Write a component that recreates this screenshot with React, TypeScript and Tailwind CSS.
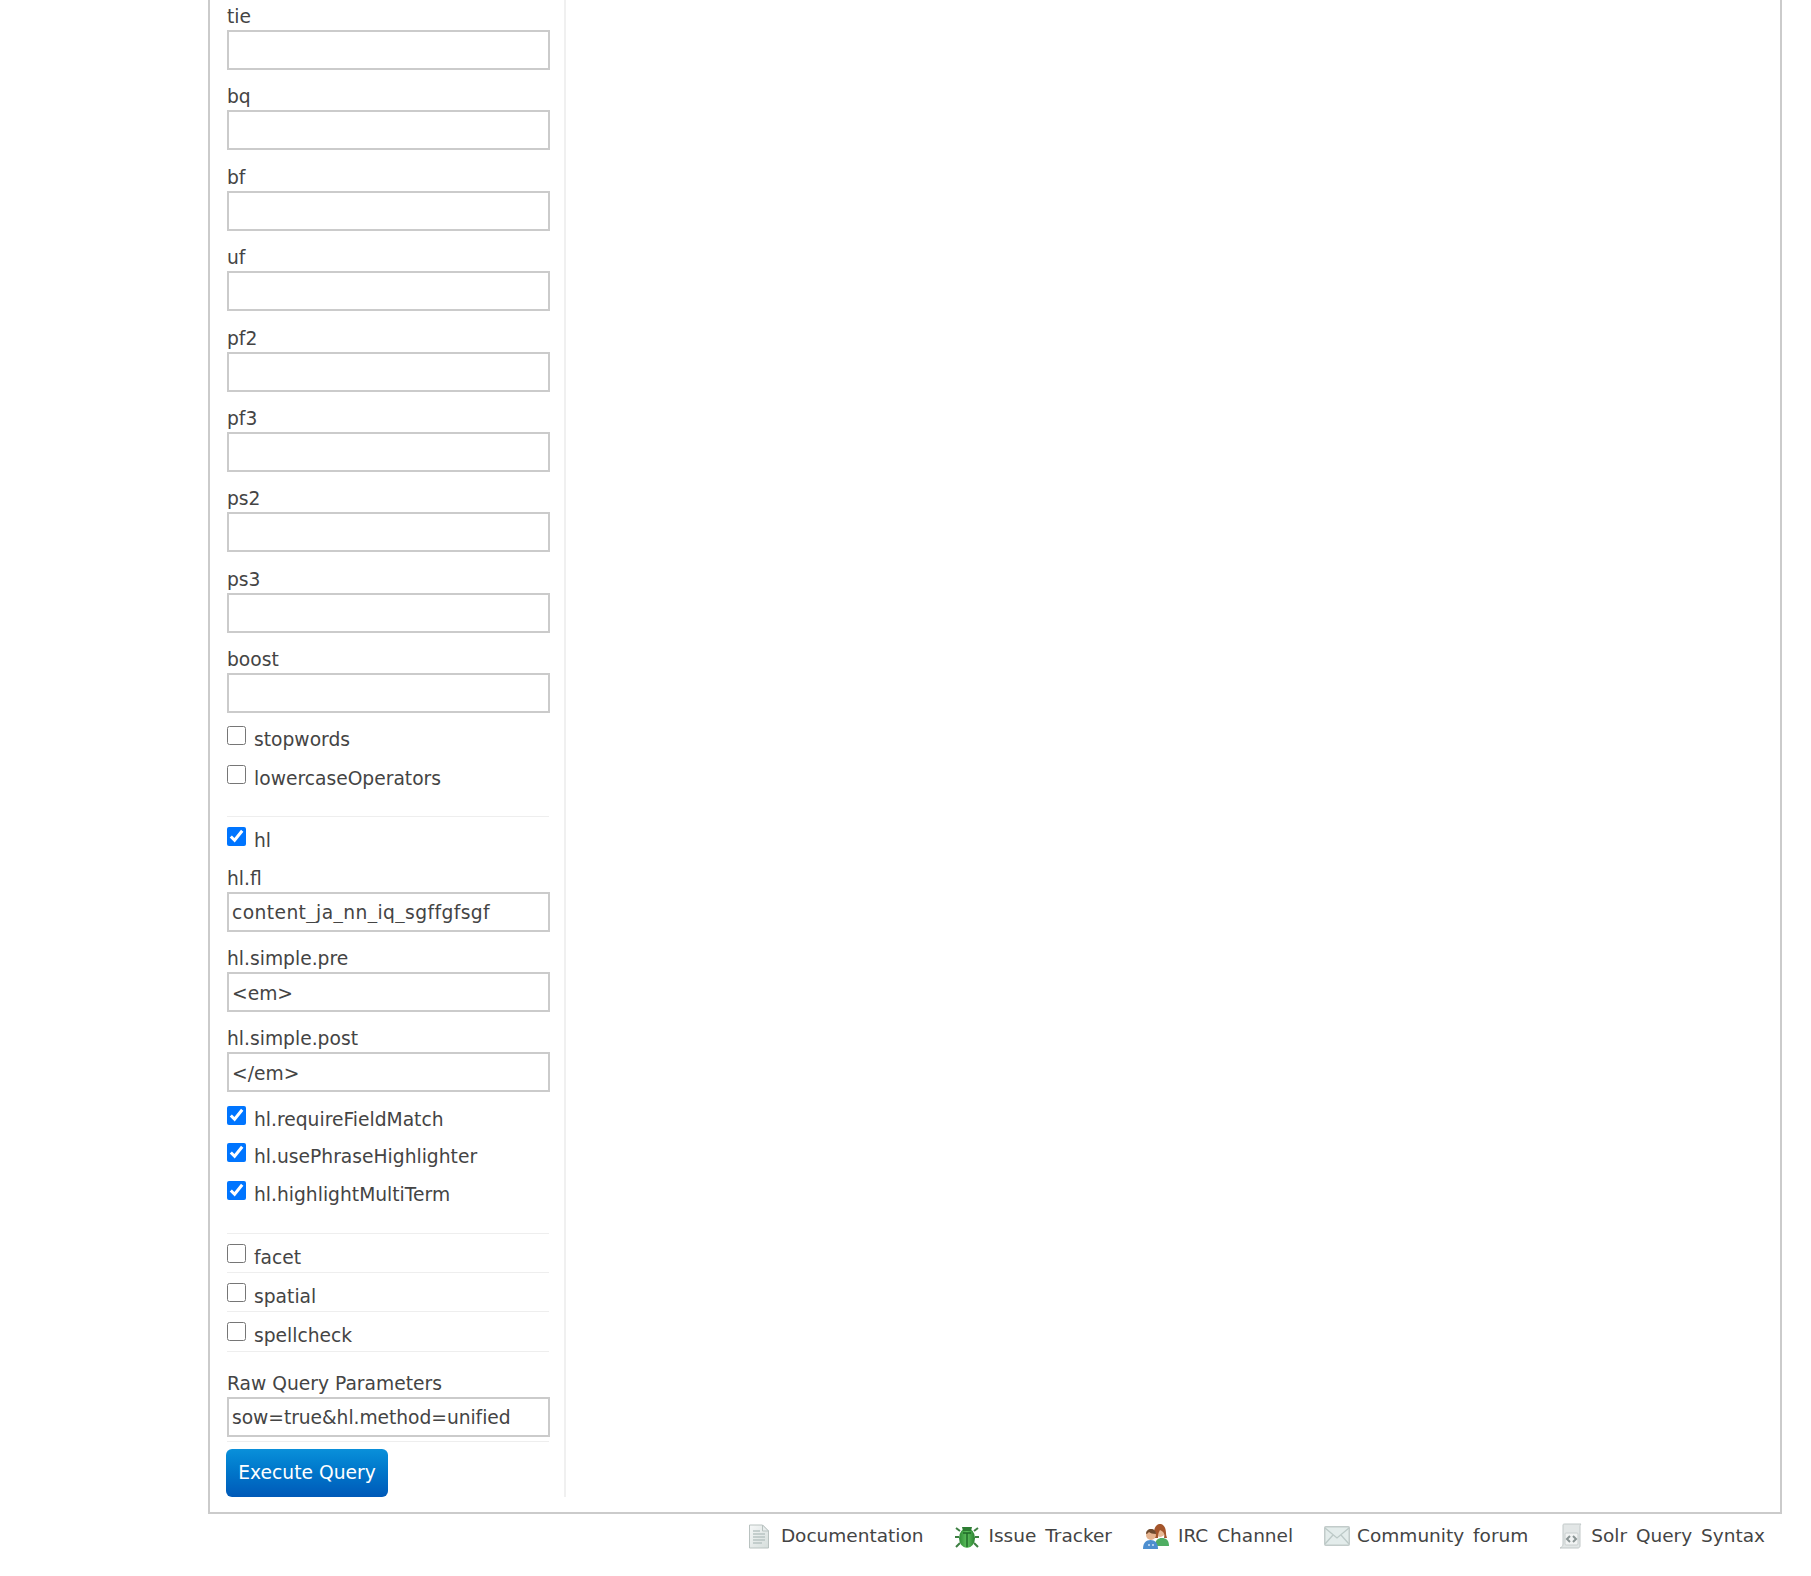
import React from 'react';

const upperFields = ['tie', 'bq', 'bf', 'uf', 'pf2', 'pf3', 'ps2', 'ps3', 'boost'];

const DocIcon = () => (
  <svg width="22" height="25" viewBox="0 0 22 25">
    <defs>
      <linearGradient id="docFill" x1="0" y1="0" x2="1" y2="1">
        <stop offset="0" stopColor="#f6f8f8" />
        <stop offset="1" stopColor="#d5dddb" />
      </linearGradient>
    </defs>
    <path d="M1.5 1h13l6 6v17h-19z" fill="url(#docFill)" stroke="#b9c2c0" />
    <path d="M14.5 1v6h6z" fill="#e8eded" stroke="#b9c2c0" />
    <path d="M5 7h7M5 10h12M5 13h12M5 16h12M5 19h9" stroke="#b8c4c2" strokeWidth="1.5" />
  </svg>
);

const BugIcon = () => (
  <svg width="24" height="25" viewBox="0 0 24 25">
    <defs>
      <linearGradient id="bugFill" x1="0" y1="0" x2="1" y2="0">
        <stop offset="0" stopColor="#2e8a35" />
        <stop offset="0.5" stopColor="#5cc05c" />
        <stop offset="1" stopColor="#2a7f30" />
      </linearGradient>
    </defs>
    <path d="M5 7 1 4M19 7l4-3M4 13H0M20 13h4M5 19l-4 4M19 19l4 4" stroke="#3d7f42" strokeWidth="2" />
    <ellipse cx="12" cy="14" rx="8" ry="10" fill="url(#bugFill)" />
    <path d="M7 3h10l-1 4H8z" fill="#2d7d33" />
    <path d="M8 9h8M12 9v14" stroke="#1f6a28" strokeWidth="1.5" />
  </svg>
);

const PeopleIcon = () => (
  <svg width="27" height="25" viewBox="0 0 27 25">
    <path d="M12 22c0-6 3-8 7-8s7 2 7 8z" fill="#4fae63" />
    <circle cx="17" cy="8" r="5" fill="#e8b995" />
    <path d="M11 9c0-6 3-9 6-9s6 3 6 9c0 3 1 4 1 5h-3c1-4 0-6-4-8-1 2-2 3-2 8h-3c0-1-1-3-1-5z" fill="#a4552b" />
    <path d="M0 25c0-6 3-9 7.500-9S15 19 15 25z" fill="#4d8fd0" />
    <circle cx="8" cy="11" r="5" fill="#e6b48f" />
    <path d="M3 10c0-3 2-5 5-5s5 2 5 5c-3 0-6-1-7-2-1 1-2 2-3 2z" fill="#6f4a2e" />
    <path d="M5 21h2M9 21h2" stroke="#cfe2f5" strokeWidth="1.5" />
  </svg>
);

const MailIcon = () => (
  <svg width="26" height="20" viewBox="0 0 26 20">
    <rect x="0.750" y="0.750" width="24.500" height="18.500" rx="1" fill="#e3eceb" stroke="#c2cbca" strokeWidth="1.500" />
    <path d="M1 2l12 10L25 2M1 18l8-9M25 18l-8-9" fill="none" stroke="#bcc9c7" strokeWidth="1.300" />
  </svg>
);

const ScriptIcon = () => (
  <svg width="23" height="26" viewBox="0 0 23 26">
    <path d="M4 2c0-1 1-1 2-1h16c-1 1-1 2-1 3v19c0 1-1 2-2 2H1c2-1 3-2 3-4z" fill="#e2e6e6" stroke="#c1c8c8" />
    <rect x="6" y="10" width="13" height="12" rx="1" fill="#f1f3f3" stroke="#c8cece" />
    <path d="M11 13l-3 3 3 3M14 13l3 3-3 3" fill="none" stroke="#8a9494" strokeWidth="2" />
  </svg>
);

const footerLinks = [
  { icon: <DocIcon />, label: 'Documentation', gap: 'gap-[11px]' },
  { icon: <BugIcon />, label: 'Issue Tracker', gap: 'gap-[10px]' },
  { icon: <PeopleIcon />, label: 'IRC Channel', gap: 'gap-[8px]' },
  { icon: <MailIcon />, label: 'Community forum', gap: 'gap-[7px]' },
  { icon: <ScriptIcon />, label: 'Solr Query Syntax', gap: 'gap-[9px]' },
];

const TextField: React.FC<{ label: string; value?: string; inputClass?: string }> = ({
  label,
  value = '',
  inputClass = '',
}) => (
  <div className="mb-[12.4px]">
    <label className="block h-[28px] leading-[30px]">{label}</label>
    <input
      readOnly
      value={value}
      className={`block w-[323px] h-[40px] border-2 border-[#cbcbcb] bg-white pl-[3px] pt-[2px] text-[#444] outline-none ${inputClass}`}
    />
  </div>
);

const CheckRow: React.FC<{ label: string; checked?: boolean; className?: string }> = ({
  label,
  checked = false,
  className = '',
}) => (
  <div className={`flex items-start gap-[8px] ${className}`}>
    <input
      type="checkbox"
      readOnly
      checked={checked}
      className="m-0 mt-[1px] w-[19px] h-[19px] shrink-0 accent-[#0075ff]"
    />
    <span className="leading-[30px]">{label}</span>
  </div>
);

const App: React.FC = () => {
  return (
    <div className="w-[1811px] h-[1576px] overflow-hidden bg-white text-[18.7px] text-[#444] font-['DejaVu_Sans',Verdana,sans-serif]">
      <div className="ml-[208px] w-[1574px] h-[1514px] border-x-2 border-b-2 border-[#cbcbcb]">
        <div className="w-[356px] h-[1497px] pl-[17px] pt-[2px] border-r-2 border-[#f0f0f0]">
          {upperFields.map((name) => (
            <TextField key={name} label={name} />
          ))}
          <CheckRow label="stopwords" className="-mt-[1px] h-[39.5px]" />
          <CheckRow label="lowercaseOperators" className="h-[38.7px]" />
          <div className="w-[322px] h-[1px] mt-[13px] mb-[9px] bg-[#eeeeee]" />
          <CheckRow label="hl" checked className="h-[38px]" />
          <TextField label="hl.fl" value="content_ja_nn_iq_sgffgfsgf" inputClass="tracking-[0.4px]" />
          <TextField label="hl.simple.pre" value="<em>" />
          <TextField label="hl.simple.post" value="</em>" />
          <div className="mt-[8px]">
            <CheckRow label="hl.requireFieldMatch" checked className="h-[37.6px]" />
            <CheckRow label="hl.usePhraseHighlighter" checked className="h-[37.6px]" />
            <CheckRow label="hl.highlightMultiTerm" checked className="h-[37.6px]" />
          </div>
          <div className="w-[322px] h-[1px] mt-[15px] bg-[#eeeeee]" />
          <div className="w-[322px]">
            <CheckRow label="facet" className="h-[39.3px] pt-[9px] border-b border-[#eeeeee]" />
            <CheckRow label="spatial" className="h-[39.3px] pt-[9px] border-b border-[#eeeeee]" />
            <CheckRow label="spellcheck" className="h-[39.4px] pt-[9px] border-b border-[#eeeeee]" />
          </div>
          <div className="mt-[17px]">
            <label className="block h-[28px] leading-[30px]">Raw Query Parameters</label>
            <input
              readOnly
              value="sow=true&hl.method=unified"
              className="block w-[323px] h-[40px] border-2 border-[#cbcbcb] bg-white pl-[3px] pt-[2px] text-[#444] tracking-[-0.05px] outline-none"
            />
          </div>
          <div className="w-[322px] h-[1px] mt-[4px] mb-[7px] bg-[#eeeeee]" />
          <button className="-ml-[1px] w-[162px] h-[48px] pt-[1px] rounded-[6px] bg-gradient-to-b from-[#0a90da] to-[#0059b8] text-white">
            Execute Query
          </button>
        </div>
      </div>
      <div className="flex justify-end items-center gap-[31px] h-[42px] mt-[1px] pr-[46px] text-[18.5px] [word-spacing:3px]">
        {footerLinks.map((link) => (
          <a key={link.label} className={`flex items-center ${link.gap}`}>
            {link.icon}
            <span>{link.label}</span>
          </a>
        ))}
      </div>
    </div>
  );
};

export default App;
